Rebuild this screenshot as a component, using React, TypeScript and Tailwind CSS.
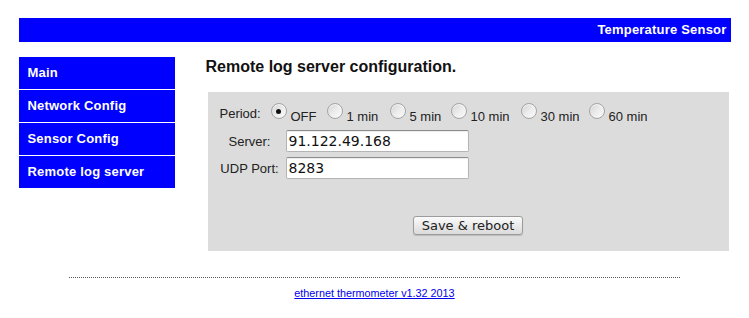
import React from "react";

const navItems = ["Main", "Network Config", "Sensor Config", "Remote log server"];

const options: { label: string; w: string; checked?: boolean }[] = [
  { label: "OFF", w: "w-[56px]", checked: true },
  { label: "1 min", w: "w-[63px]" },
  { label: "5 min", w: "w-[61px]" },
  { label: "10 min", w: "w-[70px]" },
  { label: "30 min", w: "w-[68px]" },
  { label: "60 min", w: "w-[64px]" },
];

function Radio({ checked }: { checked?: boolean }) {
  return (
    <span className="relative flex h-[16px] w-[16px] shrink-0 items-center justify-center rounded-full border border-[#a4a4a4] bg-gradient-to-br from-[#d2d2d2] via-[#ececec] to-[#fbfbfb] shadow-[inset_0_1px_1px_rgba(255,255,255,0.8)]">
      {checked && <span className="h-[5px] w-[5px] rounded-full bg-[#111]" />}
    </span>
  );
}

export default function App() {
  return (
    <div className="h-[318px] w-[749px] overflow-hidden bg-white font-['Liberation_Sans',Arial,sans-serif]">
      <div className="mx-auto w-[712px] pt-[18px]">
        <div className="flex h-[24px] items-center justify-end bg-[#0000ff] pr-[4px] text-[13px] font-bold tracking-[0.2px] text-white">
          Temperature Sensor
        </div>
        <div className="mt-[15px] flex">
          <div className="flex w-[156px] flex-col gap-px self-start">
            {navItems.map((n) => (
              <div
                key={n}
                className="flex h-[32px] items-center bg-[#0000ff] pl-[9px] text-[13px] font-bold tracking-[0.2px] text-white"
              >
                {n}
              </div>
            ))}
          </div>
          <div className="ml-[31px] flex w-[525px] flex-col">
            <h2 className="mt-[1px] text-[16px] font-bold leading-[18px] text-[#111]">
              Remote log server configuration.
            </h2>
            <div className="ml-[2px] mt-[16px] flex h-[159px] w-[521px] flex-col bg-[#dcdcdc] pt-[11px] text-[13px] text-[#222]">
              <div className="flex h-[19px] items-start pl-[12px]">
                <span className="mt-[3px] w-[51px] leading-[15px]">Period:</span>
                {options.map((o) => (
                  <div key={o.label} className={`flex items-start gap-[4px] ${o.w}`}>
                    <Radio checked={o.checked} />
                    <span className="mt-[6px] leading-[15px]">{o.label}</span>
                  </div>
                ))}
              </div>
              <div className="mt-[8px] flex items-center pl-[12px]">
                <span className="w-[60px] text-center leading-[15px]">Server:</span>
                <div className="ml-[6px] flex h-[22px] w-[183px] items-center rounded-[2px] border border-[#b4b4b4] border-t-[#8c8c8c] bg-white pl-[2px] font-['DejaVu_Sans',sans-serif] text-[14px] text-[#111] shadow-[inset_0_1px_1px_rgba(0,0,0,0.08)]">
                  91.122.49.168
                </div>
              </div>
              <div className="mt-[5px] flex items-center pl-[12px]">
                <span className="w-[60px] text-center leading-[15px]">UDP Port:</span>
                <div className="ml-[6px] flex h-[22px] w-[183px] items-center rounded-[2px] border border-[#b4b4b4] border-t-[#8c8c8c] bg-white pl-[2px] font-['DejaVu_Sans',sans-serif] text-[14px] text-[#111] shadow-[inset_0_1px_1px_rgba(0,0,0,0.08)]">
                  8283
                </div>
              </div>
              <div className="mt-[37px] flex justify-center">
                <div className="flex h-[19px] w-[110px] items-center justify-center rounded-[3px] border border-[#9c9c9c] bg-gradient-to-b from-[#fbfbfb] to-[#dadada] font-['DejaVu_Sans',sans-serif] text-[13px] text-[#222] shadow-[0_1px_1px_rgba(0,0,0,0.15)]">
                  Save &amp; reboot
                </div>
              </div>
            </div>
          </div>
        </div>
      </div>
      <div className="mx-auto mt-[26px] w-[611px] border-t border-dotted border-[#555]" />
      <div className="mt-[9px] flex justify-center">
        <a href="#" className="text-[10.8px] leading-[13px] text-[#0000ee] underline">
          ethernet thermometer v1.32 2013
        </a>
      </div>
    </div>
  );
}
